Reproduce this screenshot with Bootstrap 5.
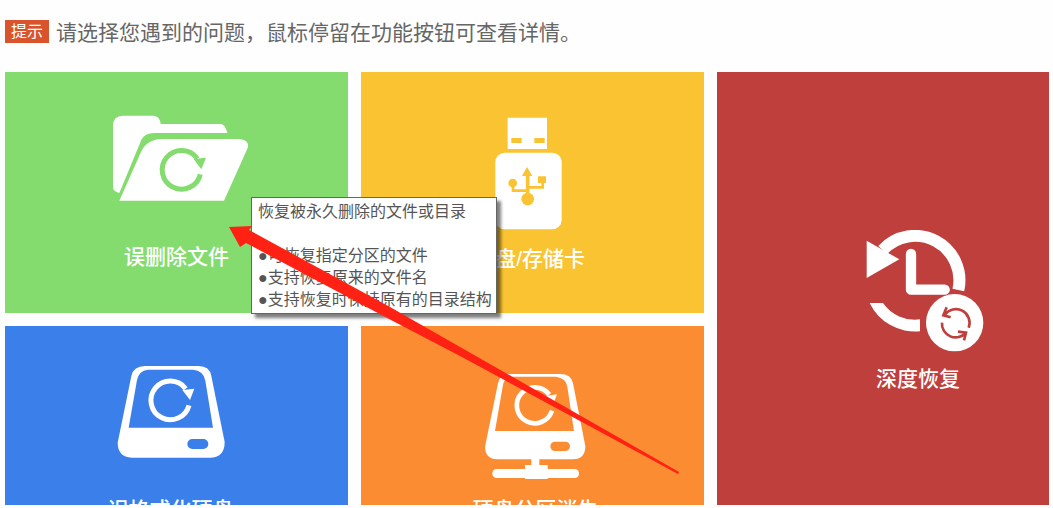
<!DOCTYPE html>
<html lang="zh-CN">
<head>
<meta charset="utf-8">
<meta name="viewport" content="width=device-width, initial-scale=1">
<title>数据恢复</title>
<link href="https://cdn.jsdelivr.net/npm/bootstrap@5.3.0/dist/css/bootstrap.min.css" rel="stylesheet">
<style>
  body { font-family: "Liberation Sans", "Noto Sans CJK SC", sans-serif; background: #fefefe; }
  .shell { height: 100vh; padding: 0 4px 3px 5px; }
  .hint { height: 72px; padding-top: 16px; gap: 7px; }
  .hint-tag { background: #d9532c; font-size: 16px; line-height: 23px; padding: 0 6px; }
  .hint-text { font-size: 21px; line-height: 34px; color: #666; font-weight: 400; }
  .board { display: grid; grid-template-columns: 343fr 343fr 332fr; grid-template-rows: 241px minmax(0, 1fr); gap: 13px; min-height: 0; }
  .tile { color: #fff; font-size: 21px; line-height: 30px; font-weight: 500; min-height: 0; }
  .tile svg { flex: none; }
  .tile-deleted { background: #84db6e; padding: 43px 0 0; gap: 41px; }
  .tile-usb { background: #fac331; padding: 45px 0 0; gap: 14px; }
  .tile-deep { background: #bf3f3d; grid-column: 3; grid-row: 1 / span 2; padding: 158px 0 0 70px; gap: 12px; }
  .tile-format { background: #3b7feb; padding: 39px 12px 0 0; gap: 36px; }
  .tile-partition { background: #fb8c32; padding: 47px 0 0 6px; gap: 15px; }
  .tip { left: 246px; top: 125px; width: 246px; height: 117px; padding: 3px 6px; border: 1px solid #666; box-shadow: 4px 4px 3px rgba(0,0,0,.5); background: #fff; color: #555; font-size: 16px; line-height: 22px; }
  .pointer { left: 224px; top: 153px; pointer-events: none; }
</style>
</head>
<body>
<div class="shell d-flex flex-column overflow-hidden">
  <header class="hint d-flex align-items-start flex-shrink-0">
    <span class="hint-tag text-white mt-1">提示</span>
    <h1 class="hint-text m-0 text-nowrap">请选择您遇到的问题，鼠标停留在功能按钮可查看详情。</h1>
  </header>
  <main class="board position-relative flex-grow-1">
    <button type="button" class="tile tile-deleted border-0 d-flex flex-column align-items-center overflow-hidden" aria-describedby="tip">
      <svg width="145" height="86" viewBox="42 45 435 258" fill="#fff" aria-hidden="true">
        <path d="M69 78Q69 47 99 47H190Q210 48 212 72H392Q406 73 412 99H192Q166 99 155 118L88 279Q69 275 69 262Z"/>
        <path d="M88 302L152 158Q170 117 218 117H448Q477 119 474 142L402 302Z"/>
        <path d="M331 223A58 58 0 1 1 322 176" fill="none" stroke="#84db6e" stroke-width="15"/>
        <path d="M311 177L348 173L334 208Z" fill="#84db6e"/>
      </svg>
      <span>误删除文件</span>
    </button>
    <button type="button" class="tile tile-usb border-0 d-flex flex-column align-items-center overflow-hidden">
      <svg width="75" height="113" viewBox="75 51 225 339" fill="#fff" aria-hidden="true">
        <path d="M113 53H231V147H113Z"/>
        <rect x="76" y="158" width="199" height="230" rx="28"/>
        <g fill="#fac331">
          <path d="M124 114H155V129H124ZM193 114H224V129H193ZM171 201L156 228H187ZM204 229H228V249H204Z"/>
          <circle cx="173" cy="297" r="19"/><circle cx="128" cy="249" r="13"/>
        </g>
        <path d="M173 225V290" stroke="#fac331" stroke-width="11"/>
        <path d="M129 255V272H173M218 248V262H173" fill="none" stroke="#fac331" stroke-width="8"/>
      </svg>
      <span>U盘/存储卡</span>
    </button>
    <button type="button" class="tile tile-deep border-0 d-flex flex-column align-items-center overflow-hidden">
      <svg width="131" height="122" viewBox="37 28 393 366" fill="#fff" aria-hidden="true">
        <path d="M353 208A133 133 0 0 0 126 88" fill="none" stroke="#fff" stroke-width="36"/>
        <path d="M78 60L176 116L78 172Z"/>
        <path d="M87 247A151 151 0 0 0 238 332V296A116 116 0 0 1 127 247Z"/>
        <path d="M211 100V207H312" fill="none" stroke="#fff" stroke-width="31" stroke-linecap="round" stroke-linejoin="round"/>
        <circle cx="342" cy="306" r="86"/>
        <path d="M384 321A41 41 0 0 0 312 283M318 260L308 284L330 290M304 306A41 41 0 0 0 376 336M352 333L376 336L370 359" fill="none" stroke="#bf3f3d" stroke-width="8"/>
      </svg>
      <span>深度恢复</span>
    </button>
    <button type="button" class="tile tile-format border-0 d-flex flex-column align-items-center overflow-hidden">
      <svg width="108" height="94" viewBox="80 45 324 282" fill="#fff" aria-hidden="true">
        <path fill-rule="evenodd" d="M164 48H325Q358 48 363 78L403 276Q403 323 358 323H124Q82 320 82 278L123 78Q130 48 164 48ZM172 59Q146 62 140 90L115 233H368L345 92Q340 62 308 59ZM306 267A15 15 0 0 0 306 297H339A15 15 0 0 0 339 267Z"/>
        <path d="M296 166A58 58 0 1 1 286 116" fill="none" stroke="#fff" stroke-width="15"/>
        <path d="M276 120L312 116L299 150Z"/>
      </svg>
      <span>误格式化硬盘</span>
    </button>
    <button type="button" class="tile tile-partition border-0 d-flex flex-column align-items-center overflow-hidden">
      <svg width="103" height="107" viewBox="72 69 309 321" fill="#fff" aria-hidden="true">
        <path fill-rule="evenodd" d="M150 72H300Q334 72 339 100L376 288Q376 328 338 328H112Q75 326 75 290L114 100Q119 72 150 72ZM154 80Q132 82 128 110L105 243H342L322 110Q318 84 288 80ZM285 275A14 14 0 0 0 285 303H316A14 14 0 0 0 316 275Z"/>
        <path d="M276 182A54 54 0 1 1 268 134" fill="none" stroke="#fff" stroke-width="14"/>
        <path d="M257 138L291 133L279 164Z"/>
        <path d="M214 326H238V345H263V387H195V345H214Z"/>
        <rect x="97" y="357" width="260" height="27" rx="13"/>
      </svg>
      <span>硬盘分区消失</span>
    </button>
    <div id="tip" role="tooltip" class="tip position-absolute text-nowrap">
      <div>恢复被永久删除的文件或目录</div>
      <br>
      <div>●可恢复指定分区的文件</div>
      <div>●支持恢复原来的文件名</div>
      <div>●支持恢复时保持原有的目录结构</div>
    </div>
    <svg class="pointer position-absolute" width="452" height="250" viewBox="229 225 452 250" aria-hidden="true">
      <path fill="#ff2113" d="M229 227L252 226L249 230L390 307L679 472L678 474L460 356L391 320L246 243L240 247Z"/>
    </svg>
  </main>
</div>
<script src="https://cdn.jsdelivr.net/npm/bootstrap@5.3.0/dist/js/bootstrap.bundle.min.js"></script>
</body>
</html>
